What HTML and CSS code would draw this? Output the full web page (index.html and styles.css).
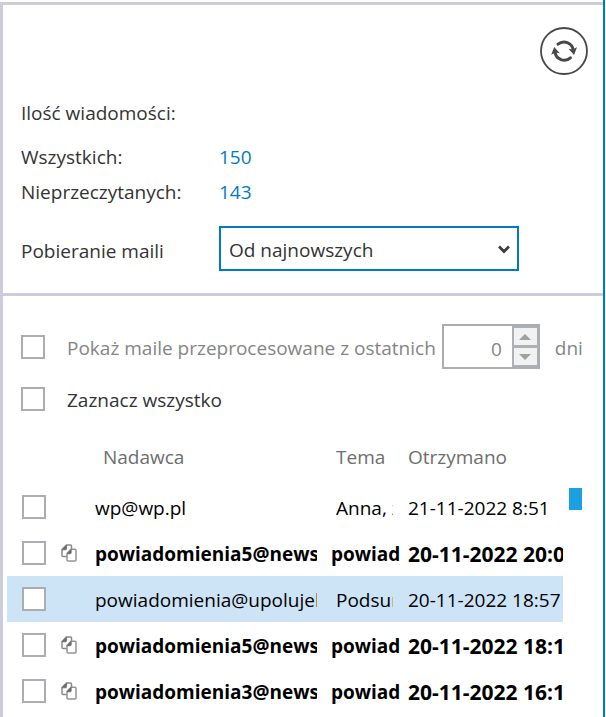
FILE: index.html
```html
<!DOCTYPE html>
<html lang="pl">
<head>
<meta charset="utf-8">
<title>Wiadomości</title>
<link rel="stylesheet" href="styles.css">
</head>
<body>
<svg class="defs" aria-hidden="true">
  <symbol id="copy" viewBox="0 0 16 18">
    <path d="M5.5 1H9.5Q10.5 1 10.5 2V12.5H2Q1 12.5 1 11.5V5.5Z" fill="#fff" stroke="#8a8a8a" stroke-width="1.5"/>
    <path d="M1.2 5.8L5.6 1.2V4.6Q5.6 5.8 4.4 5.8Z" fill="#6a6a6a" stroke="#6a6a6a" stroke-width=".8"/>
    <path d="M10 5.2H14Q15 5.2 15 6.2V16Q15 17 14 17H7Q6 17 6 16V9.5Z" fill="#fff" stroke="#959595" stroke-width="1.5"/>
    <path d="M6 9.8L10.2 5.4V8.6Q10.2 9.8 9 9.8Z" fill="#6a6a6a" stroke="#6a6a6a" stroke-width=".8"/>
  </symbol>
</svg>
<main class="window">
  <div class="pane">
    <section class="summary">
      <div class="toolbar">
        <button class="refresh" type="button" aria-label="Odśwież">
          <svg viewBox="0 0 48 48" aria-hidden="true">
            <circle cx="24" cy="24" r="23" fill="none" stroke="#484848" stroke-width="1.8"/>
            <g fill="none" stroke="#484848" stroke-width="3" stroke-linecap="round">
              <path d="M18 17.2A9.3 9.3 0 0 1 33.2 23"/>
              <path d="M30.4 30.8A9.3 9.3 0 0 1 15 25"/>
            </g>
            <path d="M28.5 21.8L32.5 22.5L37 20.3L34 28Z" fill="#484848"/>
            <path d="M19.7 26.2L15.7 25.5L11.2 27.7L14.2 20Z" fill="#484848"/>
          </svg>
        </button>
      </div>
      <p class="line heading">Ilość wiadomości:</p>
      <dl class="counts">
        <dt class="line">Wszystkich:</dt><dd class="line">150</dd>
        <dt class="line">Nieprzeczytanych:</dt><dd class="line">143</dd>
      </dl>
      <div class="field">
        <label for="order">Pobieranie maili</label>
        <div class="select">
          <select id="order"><option>Od najnowszych</option></select>
          <svg class="caret" viewBox="0 0 12 9" aria-hidden="true"><path d="M1 1.5L6 6.5L11 1.5" fill="none" stroke="#3c3c3c" stroke-width="2.8"/></svg>
        </div>
      </div>
    </section>

    <section class="messages">
      <div class="option muted">
        <input class="check" type="checkbox" id="processed">
        <label for="processed">Pokaż maile przeprocesowane z ostatnich</label>
        <div class="spinner">
          <input type="text" id="days" value="0" inputmode="numeric" aria-label="Liczba dni">
          <div class="steps">
            <button type="button" aria-label="Więcej"><svg viewBox="0 0 12 6" aria-hidden="true"><path d="M0 6L6 0L12 6Z"/></svg></button>
            <button type="button" aria-label="Mniej"><svg viewBox="0 0 12 6" aria-hidden="true"><path d="M0 0L6 6L12 0Z"/></svg></button>
          </div>
        </div>
        <label for="days">dni</label>
      </div>
      <div class="option">
        <input class="check" type="checkbox" id="all">
        <label for="all">Zaznacz wszystko</label>
      </div>

      <div class="list">
        <table>
          <colgroup><col class="c-check"><col class="c-icon"><col class="c-from"><col class="c-subject"><col class="c-date"></colgroup>
          <thead>
            <tr><th></th><th></th><th class="from"><div>Nadawca</div></th><th class="subject"><div>Tema</div></th><th><div>Otrzymano</div></th></tr>
          </thead>
          <tbody>
            <tr><td><input class="check" type="checkbox" aria-label="wp@wp.pl"></td><td></td><td class="from"><div>wp@wp.pl</div></td><td class="subject"><div>Anna, z</div></td><td class="date"><div>21-11-2022 8:51</div></td></tr>
            <tr class="unread"><td><input class="check" type="checkbox" aria-label="powiadomienia5"></td><td><svg class="copy" aria-hidden="true"><use href="#copy"/></svg></td><td class="from"><div>powiadomienia5@news</div></td><td class="subject"><div>powiado</div></td><td class="date"><div>20-11-2022 20:0</div></td></tr>
            <tr class="selected"><td><input class="check" type="checkbox" aria-label="powiadomienia"></td><td></td><td class="from"><div>powiadomienia@upolujeb</div></td><td class="subject"><div>Podsum</div></td><td class="date"><div>20-11-2022 18:57</div></td></tr>
            <tr class="unread"><td><input class="check" type="checkbox" aria-label="powiadomienia5"></td><td><svg class="copy" aria-hidden="true"><use href="#copy"/></svg></td><td class="from"><div>powiadomienia5@news</div></td><td class="subject"><div>powiado</div></td><td class="date"><div>20-11-2022 18:1</div></td></tr>
            <tr class="unread"><td><input class="check" type="checkbox" aria-label="powiadomienia3"></td><td><svg class="copy" aria-hidden="true"><use href="#copy"/></svg></td><td class="from"><div>powiadomienia3@news</div></td><td class="subject"><div>powiado</div></td><td class="date"><div>20-11-2022 16:1</div></td></tr>
          </tbody>
        </table>
        <div class="thumb"></div>
      </div>
    </section>
  </div>
</main>
</body>
</html>
```
FILE: styles.css
```css
* { box-sizing: border-box; }

body {
  margin: 0;
  background: #fff;
  color: #333;
  font: 19px/24px "Open Sans", "Noto Sans", sans-serif;
}

input, select, button { font: inherit; color: inherit; }

.defs { display: none; }

.window {
  display: flex;
  min-height: 100vh;
  margin-right: 1px;
  padding-top: 2px;
  border-right: 2px solid #0078cc;
}

.pane {
  flex: 1;
  min-width: 0;
  border: solid #ccccdc;
  border-width: 3px 0 0 3px;
}

.summary {
  padding: 22px 15px 22px 18px;
  border-bottom: 3px solid #ccccdc;
}

.toolbar { display: flex; justify-content: flex-end; }

.refresh {
  width: 48px;
  height: 48px;
  padding: 0;
  border: 0;
  border-radius: 50%;
  background: none;
}

.refresh svg { display: block; }

.line { margin: 0; line-height: 35px; }

.heading { margin-top: 21px; }

.counts, .field {
  display: grid;
  grid-template-columns: 198px 1fr;
}

.counts { margin: 9px 0 16px; }
.counts dd { color: #0078cc; }

.field { align-items: center; }
.field label { padding-top: 4px; }

.select { position: relative; max-width: 300px; }

.select select {
  display: block;
  width: 100%;
  height: 45px;
  padding: 2px 8px 0;
  border: 2px solid #0078cc;
  border-radius: 0;
  background: #fff;
  appearance: none;
}

.caret {
  position: absolute;
  top: 19px;
  right: 9px;
  width: 12px;
  height: 9px;
  pointer-events: none;
}

.messages { padding: 28px 21px 0 4px; }

.check {
  display: block;
  flex: none;
  width: 24px;
  height: 24px;
  margin: 0;
  border: 2px solid #acacb3;
  background: #fff;
  appearance: none;
}

.option {
  display: flex;
  align-items: center;
  min-height: 45px;
  margin-bottom: 7px;
  padding-left: 14px;
  white-space: nowrap;
}

.option .check { margin-right: 22px; }
.option label { padding-top: 2px; }
.muted { color: #858585; }

.spinner {
  display: flex;
  width: 98px;
  height: 45px;
  margin: 0 15px 0 6px;
  border: 2px solid #acacb3;
}

.spinner input {
  flex: 1;
  min-width: 0;
  padding: 4px 10px 0;
  border: 0;
  background: none;
  text-align: right;
}

.steps {
  display: grid;
  gap: 3px;
  width: 26px;
  padding: 2px 1px 2px 2px;
  background: #abb1b4;
}

.steps button {
  display: grid;
  place-items: center;
  padding: 0;
  border: 0;
  background: #f2f2f2;
}

.steps svg { width: 12px; height: 6px; fill: #a0a0a0; }

.list {
  display: grid;
  grid-template-columns: 1fr 13px;
  column-gap: 6px;
}

table {
  width: 100%;
  border-collapse: collapse;
  table-layout: fixed;
}

.c-check { width: 54px; }
.c-icon { width: 34px; }
.c-subject { width: 77px; }
.c-date { width: 155px; }

th, td { padding: 0; text-align: left; white-space: nowrap; }
th { height: 56px; color: #6e6e6e; font-weight: 400; }
td { height: 46px; color: #000; }
td div, th div { overflow: hidden; padding-top: 2px; }

td .check { margin-left: 15px; }
td.from { padding-right: 14px; }
th.from { padding-left: 8px; }
.subject { padding: 0 15px 0 5px; }
.unread td { font-weight: 700; }
.unread .subject { padding: 0 8px 0 0; }
.unread .date { font-size: 21px; }
.selected { background: #cde3f6; }

.copy { display: block; width: 16px; height: 18px; }

.thumb { height: 22px; margin-top: 60px; background: #1ba1e2; }
```
